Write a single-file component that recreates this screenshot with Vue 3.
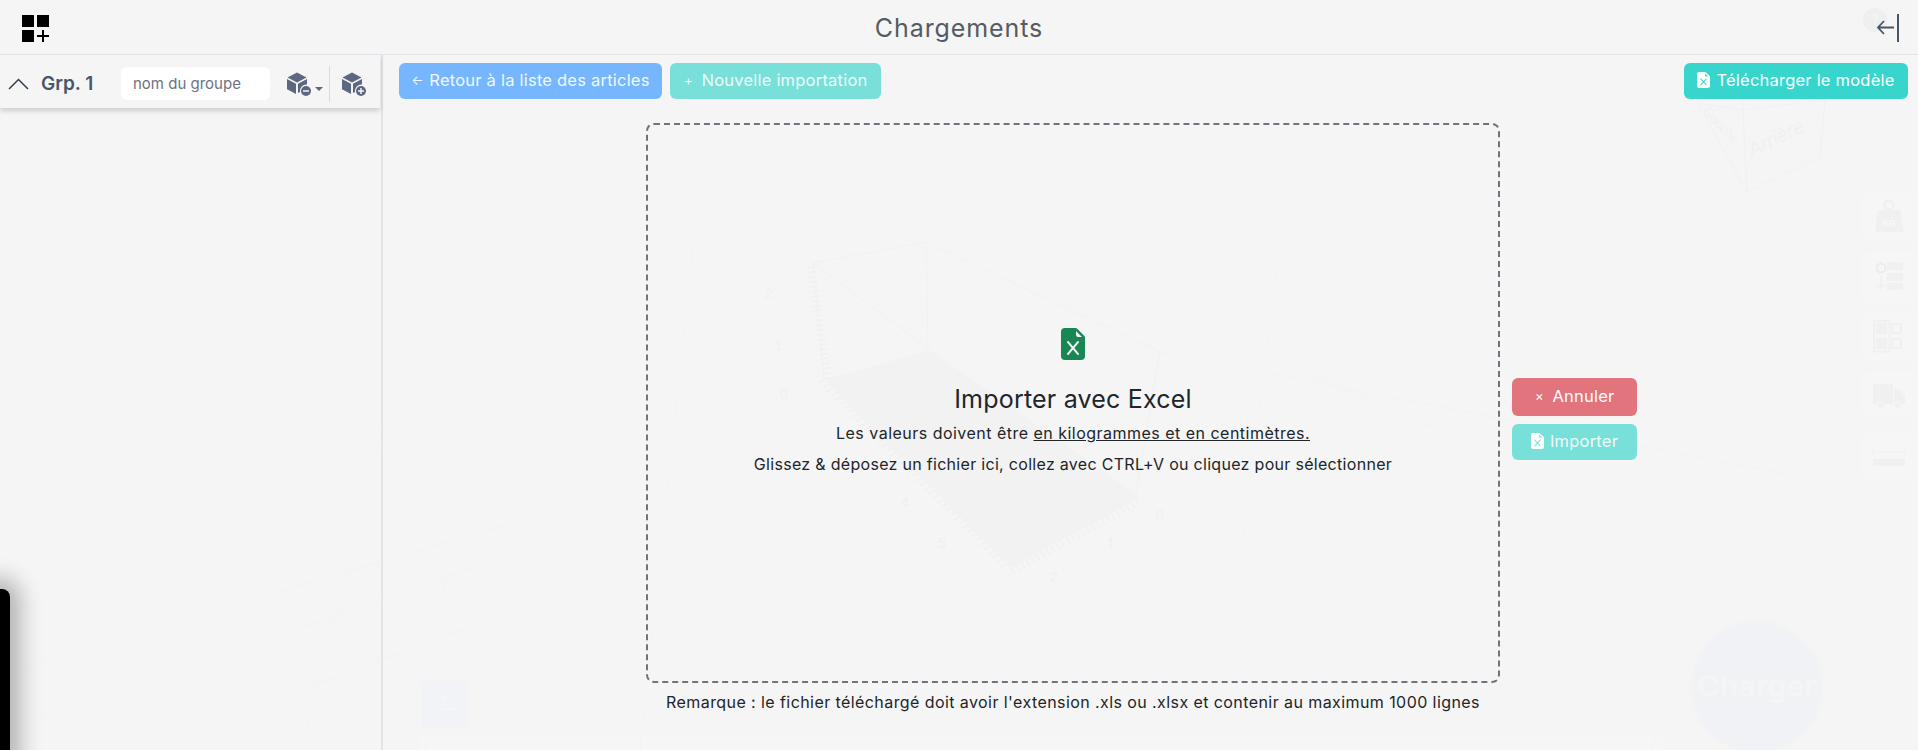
<script setup>
const gridLines = [
  [0,674,600,497],[0,734,650,505],[177,737,700,540],
  [320,300,50,750],[350,340,182,737],[400,360,302,750],[450,540,425,750],
  [1300,480,1683,672],[1300,560,1647,707],[1570,510,1857,647],[1565,610,1480,723],[1720,600,1650,750],[1867,607,1835,750],
  [1160,352,1918,500],[1010,242,1918,640],[1280,242,1240,560],[700,180,640,750],[640,420,1000,300],[650,640,815,560]
]
const leftTicks = Array.from({ length: 24 }, (_, i) => i)
const frontTicks = Array.from({ length: 44 }, (_, i) => i)
const sideTicks = Array.from({ length: 26 }, (_, i) => i)
const axisNumbers = [
  { x: 769, y: 298, t: '2' }, { x: 778, y: 350, t: '1' }, { x: 784, y: 398, t: '0' },
  { x: 905, y: 507, t: '4' }, { x: 942, y: 548, t: '5' }, { x: 1160, y: 520, t: '0' },
  { x: 1111, y: 548, t: '1' }, { x: 1054, y: 582, t: '2' }
]
const fileIcon = 'M9.293 0H4a2 2 0 0 0-2 2v12a2 2 0 0 0 2 2h8a2 2 0 0 0 2-2V4.707A1 1 0 0 0 13.707 4L10 .293A1 1 0 0 0 9.293 0M9.5 3.5v-2l3 3h-2a1 1 0 0 1-1-1M5.884 6.680 8 9.219l2.116-2.540a.5.5 0 1 1 .768.641L8.651 10l2.233 2.680a.5.5 0 0 1-.768.640L8 10.781l-2.116 2.540a.5.5 0 0 1-.768-.641L7.349 10 5.116 7.320a.5.5 0 1 1 .768-.640'
const cubeBody = 'M11 1.500 20.500 6.500 11 11.500 1.500 6.500zM1 8l9 4.700V23l-9-4.700zM12 12.700 21 8v5.500a6.500 6.500 0 0 0-7 7.400L12 22z'
</script>

<template>
  <div class="page">
    <svg class="backdrop" width="1918" height="750" viewBox="0 0 1918 750" aria-hidden="true">
      <rect x="420" y="736" width="1245" height="14" fill="#f6f6f6" />
      <line v-for="(l, i) in gridLines" :key="i" :x1="l[0]" :y1="l[1]" :x2="l[2]" :y2="l[3]" stroke="#f3f3f3" stroke-width="1" />
      <polygon points="930,350 824,380 1011,568 1140,497" fill="#f2f2f2" />
      <path d="M813,263 926,242 1160,352 1136,493M813,263 928,348M926,242 928,348M813,263 824,380" fill="none" stroke="#f1f1f1" />
      <line v-for="t in leftTicks" :key="'l' + t" :x1="807 + t * .72" :y1="268 + t * 4.8" :x2="815 + t * .72" :y2="267 + t * 4.8" stroke="#efefef" />
      <line v-for="t in frontTicks" :key="'f' + t" :x1="824 + t * 4.25" :y1="380 + t * 4.270" :x2="818 + t * 4.25" :y2="383 + t * 4.270" stroke="#eeeeee" />
      <line v-for="t in sideTicks" :key="'s' + t" :x1="1011 + t * 5" :y1="568 - t * 2.75" :x2="1015 + t * 5" :y2="574 - t * 2.75" stroke="#eeeeee" />
      <text v-for="(n, i) in axisNumbers" :key="'n' + i" :x="n.x" :y="n.y" font-size="14" font-family="Liberation Sans, sans-serif" fill="#f0f0f0" text-anchor="middle">{{ n.t }}</text>

      <path d="M1698 103l49 89 73-35 5-57M1698 103l45 7 82-10M1743 110l4 82M1743 110v-50" fill="none" stroke="#f1f1f1" />
      <text x="1752" y="157" transform="rotate(-26 1752 157)" font-size="20" font-style="italic" font-family="Liberation Sans, sans-serif" fill="#f0f0f0">Arrière</text>
      <text x="1702" y="112" transform="rotate(46 1702 112)" font-size="13" font-family="Liberation Sans, sans-serif" fill="#f0f0f0">Gauche</text>

      <g fill="#f6f6f6">
        <rect x="1861" y="193" width="57" height="48" rx="6" />
        <rect x="1861" y="252" width="57" height="50" rx="6" />
        <rect x="1861" y="312" width="57" height="48" rx="6" />
        <rect x="1861" y="372" width="57" height="46" rx="6" />
        <rect x="1861" y="432" width="57" height="48" rx="6" />
      </g>
      <g fill="#f0f0f0">
        <path d="M1878 210h22l4 22h-29z" />
        <circle cx="1889" cy="205" r="4.500" fill="none" stroke="#f0f0f0" stroke-width="2.500" />
        <text x="1889" y="226" text-anchor="middle" font-size="9" font-weight="700" font-family="Liberation Sans, sans-serif" fill="#f8f8f8">KG</text>
        <rect x="1887" y="262" width="16" height="8" />
        <rect x="1887" y="273" width="16" height="8" />
        <rect x="1887" y="283" width="16" height="7" />
        <circle cx="1881" cy="268" r="4.500" fill="none" stroke="#f1eaea" stroke-width="2" />
        <path d="M1880 275h2v11l3-3 1 1-5 5-5-5 1-1 3 3z" />
        <rect x="1874" y="321" width="15.500" height="30.500" fill="none" stroke="#f0f0f0" stroke-width="2" />
        <rect x="1876" y="323" width="11" height="11" />
        <rect x="1876" y="338" width="11" height="11" />
        <rect x="1892" y="324" width="9" height="9" fill="none" stroke="#f0f0f0" stroke-width="2" />
        <rect x="1892" y="339" width="9" height="9" fill="none" stroke="#f0f0f0" stroke-width="2" />
        <path d="M1873 384h20v20h-20zM1894 389h5l6 7v8h-11z" />
        <circle cx="1881" cy="405" r="3.500" stroke="#f5f5f5" stroke-width="1.500" />
        <circle cx="1898" cy="405" r="3.500" stroke="#f5f5f5" stroke-width="1.500" />
        <rect x="1873" y="459" width="32" height="7" />
        <path d="M1873 447v9M1905 447v9M1875 452h28" stroke="#f0f0f0" fill="none" />
      </g>

      <circle cx="1757" cy="687" r="68" fill="#f4f4f5" />
      <circle cx="1757" cy="687" r="65" fill="#f1f2f5" />
      <text x="1757" y="697" text-anchor="middle" font-size="30" font-weight="700" font-family="Inter, sans-serif" fill="#f4f5f5">Charger</text>
      <rect x="421" y="680" width="47" height="48" rx="5" fill="#f2f3f6" />
      <path d="M445 695v11M440 700l5-5 5 5M435 709h21" fill="none" stroke="#f5f6f7" stroke-width="1.500" />
      <circle cx="1875" cy="20" r="12" fill="#eeeff0" />
      <text x="1875" y="25" text-anchor="middle" font-size="14" font-weight="700" font-family="Inter, sans-serif" fill="#f5f5f5">?</text>
    </svg>

    <header class="topbar">
      <svg class="grid-add" width="28" height="28" viewBox="0 0 28 28" aria-label="Ajouter">
        <rect x="0" y="0" width="12" height="12" />
        <rect x="15" y="0" width="12" height="12" />
        <rect x="0" y="15" width="12" height="12" />
        <path d="M21 15v12M15 21h12" fill="none" stroke="#000" stroke-width="2" />
      </svg>
      <h1 class="title">Chargements</h1>
      <svg class="collapse" width="24" height="30" viewBox="0 0 24 30" aria-label="Réduire">
        <path d="M18 14.500H2M8 8l-6 6.500 6 6.500" fill="none" stroke="#475569" stroke-width="1.800" />
        <path d="M22 1v28" stroke="#475569" stroke-width="2" fill="none" />
      </svg>
    </header>

    <div class="body">
      <aside class="sidebar">
        <div class="group-head">
          <svg class="chevron" width="22" height="12" viewBox="0 0 22 12">
            <path d="M1 11 10.500 1.500 20 11" fill="none" stroke="#374151" stroke-width="1.500" />
          </svg>
          <span class="group-name">Grp. 1</span>
          <input class="group-input" type="text" placeholder="nom du groupe" />
          <span class="box-btn box-minus">
            <svg width="26" height="26" viewBox="0 0 26 26">
              <path :d="cubeBody" fill="#5b6880" />
              <circle cx="20" cy="20" r="5" fill="#5b6880" />
              <path d="M17 20h6" stroke="#f5f5f5" stroke-width="1.500" />
            </svg>
            <i class="caret"></i>
          </span>
          <span class="divider"></span>
          <span class="box-btn">
            <svg width="26" height="26" viewBox="0 0 26 26">
              <path :d="cubeBody" fill="#5b6880" />
              <circle cx="20" cy="20" r="5" fill="#5b6880" />
              <path d="M17 20h6M20 17v6" stroke="#f5f5f5" stroke-width="1.500" />
            </svg>
          </span>
        </div>
        <div class="dock"></div>
      </aside>

      <main class="content">
        <div class="toolbar">
          <button class="btn btn-blue wide"><span class="glyph">←</span>Retour à la liste des articles</button>
          <button class="btn btn-teal-soft mid"><span class="glyph">+</span>Nouvelle importation</button>
          <button class="btn btn-teal model">
            <svg width="13" height="16" viewBox="2 0 12 16" preserveAspectRatio="none">
              <path :d="fileIcon" fill="#fff" />
            </svg>
            Télécharger le modèle
          </button>
        </div>

        <div class="import-row">
          <div class="drop-col">
            <section class="dropzone">
              <svg class="xls" width="24" height="32" viewBox="2 0 12 16">
                <path :d="fileIcon" fill="#198754" />
              </svg>
              <h2 class="drop-title">Importer avec Excel</h2>
              <p class="drop-line first">Les valeurs doivent être <u>en kilogrammes et en centimètres.</u></p>
              <p class="drop-line second">Glissez &amp; déposez un fichier ici, collez avec CTRL+V ou cliquez pour sélectionner</p>
            </section>
            <p class="remark">Remarque : le fichier téléchargé doit avoir l'extension .xls ou .xlsx et contenir au maximum 1000 lignes</p>
          </div>
          <div class="actions">
            <button class="btn btn-red"><span class="glyph">×</span>Annuler</button>
            <button class="btn btn-teal-soft">
              <svg width="13" height="16" viewBox="2 0 12 16" preserveAspectRatio="none">
                <path :d="fileIcon" fill="#fff" />
              </svg>
              Importer
            </button>
          </div>
        </div>
      </main>
    </div>
  </div>
</template>

<style>
html, body { margin: 0; background: #f5f5f5; overflow: hidden; }
</style>

<style scoped>
.page {
  position: relative;
  width: 1918px;
  height: 750px;
  overflow: hidden;
  background: #f5f5f5;
  font-family: Inter, "Noto Sans", sans-serif;
  color: #212529;
}
.backdrop { position: absolute; inset: 0; }
.topbar {
  position: relative;
  height: 54px;
  border-bottom: 1px solid #e4e4ec;
  display: flex;
  align-items: center;
  justify-content: space-between;
  padding: 0 18px 0 22px;
}
.title {
  position: absolute;
  left: 0;
  right: 0;
  top: 13px;
  margin: 0;
  text-align: center;
  font-size: 25px;
  line-height: 30px;
  font-weight: 400;
  letter-spacing: .9px;
  color: #555b64;
}
.grid-add { margin-top: 3px; }
.collapse { margin-top: 1px; }
.body { position: relative; display: flex; height: 695px; }
.sidebar {
  position: relative;
  width: 381px;
  flex: none;
  border-right: 2px solid #e1e5ea;
}
.group-head {
  width: 380px;
  height: 53px;
  box-sizing: border-box;
  padding-top: 4px;
  display: flex;
  align-items: center;
  box-shadow: 0 3px 5px rgba(0, 0, 0, .16);
  background: #f5f5f5;
}
.chevron { margin-left: 8px; flex: none; }
.group-name {
  margin-left: 11px;
  width: 80px;
  font-size: 19px;
  font-weight: 600;
  color: #475569;
}
.group-input {
  width: 149px;
  height: 33px;
  box-sizing: border-box;
  border: 0;
  border-radius: 6px;
  padding: 0 12px;
  background: #fff;
  font: 400 15px Inter, sans-serif;
  outline: 0;
}
.group-input::placeholder { color: #6b7280; opacity: 1; }
.box-btn { display: inline-flex; align-items: center; height: 26px; }
.box-minus { margin-left: 16px; }
.caret {
  margin-left: 3px;
  margin-top: 10px;
  border-left: 4px solid transparent;
  border-right: 4px solid transparent;
  border-top: 4px solid #5b6880;
}
.divider { width: 1px; height: 36px; background: #d8dade; margin: 0 11px 0 6px; }
.dock {
  position: absolute;
  left: -40px;
  top: 534px;
  width: 50px;
  height: 300px;
  border-radius: 8px;
  background: #000;
  box-shadow: 0 0 22px 10px rgba(0, 0, 0, .28);
}
.content { position: relative; flex: 1; padding-left: 16px; }
.toolbar { display: flex; gap: 8px; padding: 8px 10px 0 0; }
.btn {
  height: 36px;
  box-sizing: border-box;
  border: 0;
  border-radius: 6px;
  display: inline-flex;
  align-items: center;
  justify-content: center;
  gap: 6px;
  padding: 0 0 2px;
  color: #fff;
  font: 400 16.500px Inter, sans-serif;
  letter-spacing: .22px;
  white-space: nowrap;
}
.wide { width: 263px; }
.mid { width: 211px; }
.model { width: 224px; margin-left: auto; }
.glyph { display: inline-block; width: 10px; margin-right: 2px; font-size: 13px; text-align: center; }
.btn-blue { background: #75b6ff; color: #f1f8ff; }
.btn-teal { background: #37d5cb; }
.btn-teal-soft { background: #79dfd9; color: #eefbfa; }
.btn-red { background: #e2747e; }
.import-row { display: flex; margin-top: 24px; padding-left: 247px; }
.drop-col { width: 854px; flex: none; }
.dropzone {
  height: 560px;
  box-sizing: border-box;
  border: 2px dashed #6c757d;
  border-radius: 8px;
  display: flex;
  flex-direction: column;
  align-items: center;
  padding-top: 203px;
}
.xls { display: block; }
.drop-title {
  margin: 22px 0 0;
  font-size: 25px;
  line-height: 34px;
  font-weight: 400;
  letter-spacing: .2px;
  color: #212529;
}
.drop-line {
  margin: 7px 0 0;
  font-size: 16px;
  line-height: 20px;
  font-weight: 400;
  color: #212529;
  white-space: nowrap;
}
.drop-line.first { letter-spacing: .48px; }
.drop-line.second { margin-top: 11px; letter-spacing: .3px; }
.remark {
  margin: 8px 0 0;
  text-align: center;
  font-size: 16px;
  line-height: 22px;
  letter-spacing: .42px;
  color: #212529;
  white-space: nowrap;
}
.actions {
  width: 125px;
  margin-left: 12px;
  margin-top: 255px;
  display: flex;
  flex-direction: column;
  gap: 8px;
}
.actions .btn { width: 125px; }
.actions .btn:first-child { height: 38px; }
</style>
